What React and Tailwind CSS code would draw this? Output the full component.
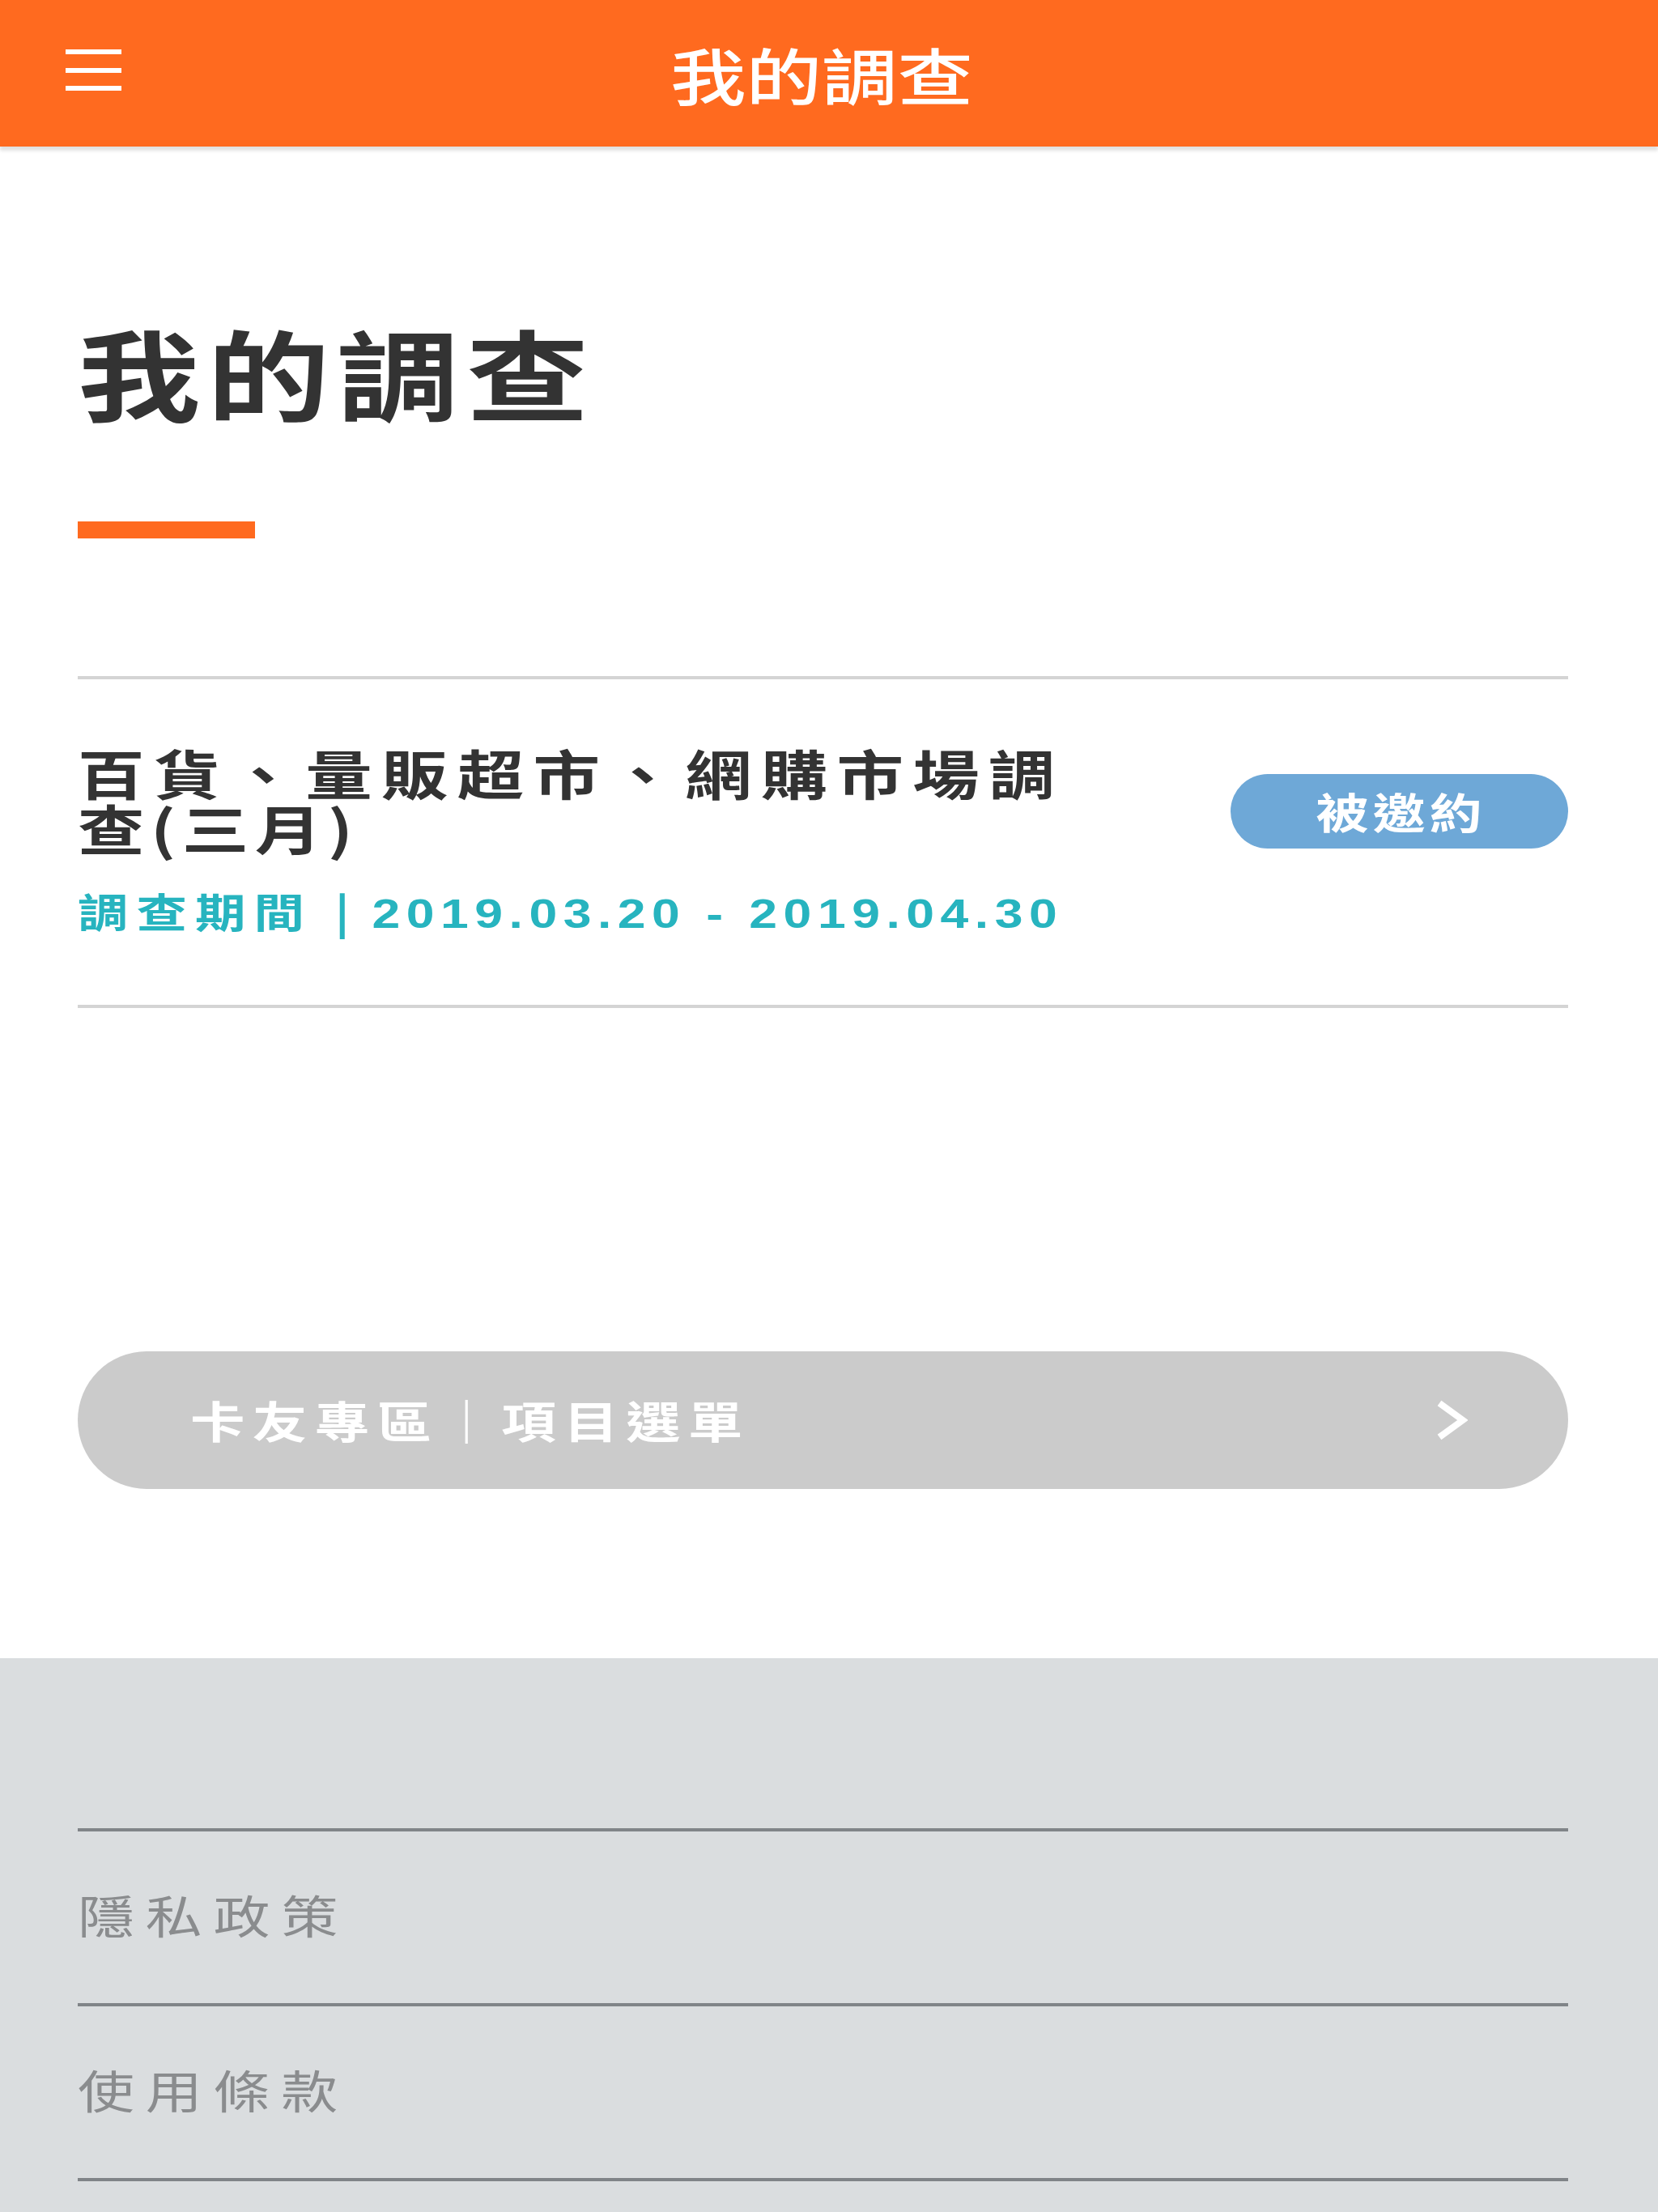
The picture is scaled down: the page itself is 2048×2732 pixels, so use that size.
const cjk = { fontFamily: '"Noto Sans CJK TC", "Noto Sans", sans-serif' };
const latin = { fontFamily: '"Liberation Sans", "Noto Sans CJK TC", sans-serif' };

function Header() {
  return (
    <header className="relative h-[181px] bg-[#ff6a1f] flex items-center justify-center pr-[18px] shadow-[0_5px_4px_rgba(0,0,0,0.12)] z-10">
      <button className="absolute left-[81px] top-[61px] w-[69px] h-[51px] flex flex-col justify-between">
        <span className="block h-[6px] w-full bg-white" />
        <span className="block h-[6px] w-full bg-white" />
        <span className="block h-[6px] w-full bg-white" />
      </button>
      <h1 className="inline-block text-white text-[76px] leading-none font-medium scale-x-[1.23] origin-center">
        我的調查
      </h1>
    </header>
  );
}

function SurveyItem() {
  return (
    <div className="flex items-start justify-between border-b-4 border-[#d4d4d4] pt-[80px] pb-[87px]">
      <div>
        <h3 className="inline-block whitespace-nowrap text-[#333333] text-[66px] leading-[68px] font-bold tracking-[9px] scale-x-[1.25] origin-left">
          百貨、量販超市、網購市場調
          <br />
          <span className="tracking-[6px]">查(三月)</span>
        </h3>
        <div>
          <p className="inline-block mt-[44px] whitespace-nowrap text-[#27b4bf] text-[50px] leading-none font-bold scale-x-[1.25] origin-left">
            <span className="tracking-[8px]">調查期間</span>
            <span className="mx-[22px]">|</span>
            <span style={latin} className="tracking-[6px]">2019.03.20 - 2019.04.30</span>
          </p>
        </div>
      </div>
      <span className="mt-[37px] w-[417px] h-[92px] rounded-full bg-[#6ea8d7] flex items-center justify-center">
        <span className="inline-block text-white text-[52px] leading-none font-bold tracking-[4px] pl-[4px] scale-x-[1.25]">
          被邀約
        </span>
      </span>
    </div>
  );
}

function Chevron() {
  return (
    <svg width="40" height="50" viewBox="0 0 40 50" fill="none">
      <polyline points="5,4 34,25 5,46" stroke="white" strokeWidth="8" strokeLinejoin="miter" />
    </svg>
  );
}

export default function App() {
  return (
    <div className="w-[2048px] min-h-[2732px] bg-white overflow-hidden" style={cjk}>
      <Header />

      <main className="pl-[96px] pr-[111px] pb-[209px]">
        <h2 className="inline-block mt-[216px] text-[#333333] text-[122px] leading-none font-bold tracking-[7px] scale-x-[1.24] origin-left">
          我的調查
        </h2>
        <div className="mt-[125px] w-[219px] h-[21px] bg-[#ff6a1f]" />

        <div className="mt-[170px] border-t-4 border-[#d4d4d4]">
          <SurveyItem />
        </div>

        <button className="mt-[424px] w-full h-[170px] rounded-full bg-[#cbcbcb] flex items-center justify-between pl-[139px] pr-[124px]">
          <span className="inline-block text-white text-[54px] leading-none font-bold tracking-[7.5px] scale-x-[1.25] origin-left">
            卡友專區｜項目選單
          </span>
          <Chevron />
        </button>
      </main>

      <footer className="bg-[#dadddf] pl-[96px] pr-[111px] pt-[210px] pb-[40px]">
        <div className="border-t-4 border-[#808488]">
          <a className="flex items-center h-[216px] pb-[8px] border-b-4 border-[#808488]">
            <span className="inline-block text-[#8a8c8e] text-[56px] leading-none tracking-[11px] scale-x-[1.25] origin-left">隱私政策</span>
          </a>
          <a className="flex items-center h-[216px] pb-[8px] border-b-4 border-[#808488]">
            <span className="inline-block text-[#8a8c8e] text-[56px] leading-none tracking-[11px] scale-x-[1.25] origin-left">使用條款</span>
          </a>
        </div>
      </footer>
    </div>
  );
}
